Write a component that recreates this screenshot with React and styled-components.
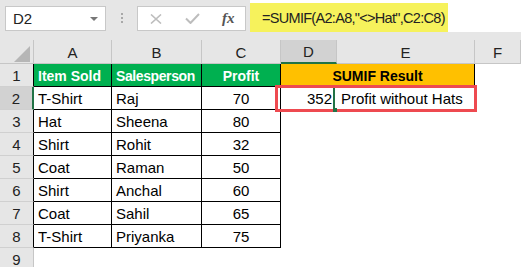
import styled, { createGlobalStyle } from 'styled-components';

const GlobalStyle = createGlobalStyle`
  body {
    margin: 0;
    background: #fff;
    font-family: "Liberation Sans", Arial, sans-serif;
    overflow: hidden;
  }
`;

const columns = ['A', 'B', 'C', 'D', 'E', 'F'];

const rows = [
  ['T-Shirt', 'Raj', 70],
  ['Hat', 'Sheena', 80],
  ['Shirt', 'Rohit', 32],
  ['Coat', 'Raman', 50],
  ['Shirt', 'Anchal', 60],
  ['Coat', 'Sahil', 65],
  ['T-Shirt', 'Priyanka', 75],
];

const App = () => {
  return (
    <>
      <GlobalStyle />
      <Toolbar>
        <NameBox>
          D2
          <Caret />
        </NameBox>
        <Grip>
          <i />
          <i />
          <i />
        </Grip>
        <FxBox>
          <svg width="12" height="10" viewBox="0 0 12 10">
            <path d="M1 0.5 L11 9.5 M11 0.5 L1 9.5" stroke="#bdbdbd" strokeWidth="1.6" fill="none" />
          </svg>
          <svg width="15" height="11" viewBox="0 0 15 11">
            <path d="M1 5.5 L5.5 10 L14 1" stroke="#bdbdbd" strokeWidth="2" fill="none" />
          </svg>
          <FxLabel>fx</FxLabel>
        </FxBox>
        <FormulaBar>
          <Highlight>=SUMIF(A2:A8,"&lt;&gt;Hat",C2:C8)</Highlight>
        </FormulaBar>
      </Toolbar>

      <Sheet>
        <Corner>
          <svg width="16" height="16" viewBox="0 0 16 16">
            <polygon points="0,16 16,16 16,0" fill="#b6b6b6" />
          </svg>
        </Corner>
        {columns.map((c) => (
          <ColHead key={c} $selected={c === 'D'}>{c}</ColHead>
        ))}

        <RowHead $table>1</RowHead>
        <Cell $bg="#00b050" $fg="#fff" $bold $edge>Item Sold</Cell>
        <Cell $bg="#00b050" $fg="#fff" $bold $edge $tight>Salesperson</Cell>
        <Cell $bg="#00b050" $fg="#fff" $bold $edge $align="center">Profit</Cell>
        <Cell $bg="#ffc000" $bold $edge $align="center" $span={2}>SUMIF Result</Cell>
        <Cell />

        {rows.map(([item, person, profit], i) => (
          <Row key={i}>
            <RowHead $table $selected={i === 0}>{i + 2}</RowHead>
            <Cell $edge>{item}</Cell>
            <Cell $edge>{person}</Cell>
            <Cell $edge $align="center">{profit}</Cell>
            {i === 0 ? (
              <>
                <ActiveCell $align="right">352</ActiveCell>
                <Cell>Profit without Hats</Cell>
              </>
            ) : (
              <>
                <Cell />
                <Cell />
              </>
            )}
            <Cell />
          </Row>
        ))}

        <RowHead>9</RowHead>
        {columns.map((c) => (
          <Cell key={c} />
        ))}

        <Callout />
      </Sheet>
    </>
  );
};

export default App;

const Toolbar = styled.div`
  height: 40px;
  background: #e6e6e6;
  display: flex;
  align-items: flex-start;
`;

const NameBox = styled.div`
  margin: 6px 0 0 5px;
  width: 101px;
  height: 25px;
  box-sizing: border-box;
  border: 1px solid #c8c8c8;
  background: #fff;
  display: flex;
  align-items: center;
  justify-content: space-between;
  padding: 0 7px 0 7px;
  font-size: 15px;
  color: #222;
`;

const Caret = styled.span`
  width: 0;
  height: 0;
  border-left: 4px solid transparent;
  border-right: 4px solid transparent;
  border-top: 4px solid #777;
`;

const Grip = styled.div`
  margin: 13px 14px 0 15px;
  display: flex;
  flex-direction: column;
  gap: 2px;

  i {
    display: block;
    width: 2px;
    height: 2px;
    background: #a8a8a8;
  }
`;

const FxBox = styled.div`
  margin-top: 6px;
  width: 109px;
  height: 25px;
  box-sizing: border-box;
  border: 1px solid #c8c8c8;
  background: #fff;
  display: flex;
  align-items: center;
  padding-left: 12px;
  gap: 23px;
`;

const FxLabel = styled.span`
  font-family: "Liberation Serif", "Times New Roman", serif;
  font-style: italic;
  font-weight: 700;
  font-size: 15px;
  color: #555;
  margin-left: -1px;
`;

const FormulaBar = styled.div`
  margin-left: 4px;
  flex: 1;
  height: 32px;
  background: #fff;
`;

const Highlight = styled.div`
  margin-top: 3px;
  width: 198px;
  height: 29px;
  box-sizing: border-box;
  background: #f6f25c;
  display: flex;
  align-items: center;
  padding-left: 12px;
  font-size: 14.5px;
  letter-spacing: -0.7px;
  color: #222;
  white-space: nowrap;
`;

const Sheet = styled.div`
  position: relative;
  display: grid;
  grid-template-columns: 34px 78px 90px 79px 56px 138px 1fr;
  grid-template-rows: 24px repeat(9, 23px);
  font-size: 15px;
`;

const Row = styled.div`
  display: contents;
`;

const Corner = styled.div`
  background: #e6e6e6;
  border-right: 1px solid #c6c6c6;
  border-bottom: 1px solid #c6c6c6;
  box-sizing: border-box;
  display: flex;
  align-items: flex-end;
  justify-content: flex-end;
  padding: 0 3px 1px 0;
`;

const ColHead = styled.div`
  background: ${(p) => (p.$selected ? '#d2d2d2' : '#e6e6e6')};
  border-right: 1px solid #c6c6c6;
  border-bottom: ${(p) => (p.$selected ? '2px solid #217346' : '1px solid #c6c6c6')};
  box-sizing: border-box;
  display: flex;
  align-items: center;
  justify-content: center;
  color: #222;
  padding-top: 1px;
`;

const RowHead = styled.div`
  background: ${(p) => (p.$selected ? '#d2d2d2' : '#e6e6e6')};
  border-bottom: 1px solid #d0d0d0;
  border-right: ${(p) =>
    p.$selected ? '2px solid #217346' : p.$table ? '1px solid #000' : '1px solid #c6c6c6'};
  box-sizing: border-box;
  display: flex;
  align-items: flex-end;
  justify-content: center;
  line-height: 18px;
  padding-bottom: 1px;
  color: #222;
`;

const Cell = styled.div`
  grid-column: span ${(p) => p.$span || 1};
  background: ${(p) => p.$bg || '#fff'};
  color: ${(p) => p.$fg || '#000'};
  font-weight: ${(p) => (p.$bold ? 700 : 400)};
  font-size: ${(p) => (p.$bold ? '14px' : '15px')};
  letter-spacing: ${(p) => (p.$tight ? '-0.4px' : '0')};
  border-right: 1px solid ${(p) => (p.$edge ? '#000' : 'transparent')};
  border-bottom: 1px solid ${(p) => (p.$edge ? '#000' : 'transparent')};
  box-sizing: border-box;
  display: flex;
  align-items: flex-end;
  justify-content: ${(p) =>
    p.$align === 'center' ? 'center' : p.$align === 'right' ? 'flex-end' : 'flex-start'};
  line-height: 18px;
  padding: 0 4px 1px 4px;
  white-space: nowrap;
`;

const ActiveCell = styled(Cell)`
  position: relative;

  /* only the right edge of the selection frame shows past the callout */
  &::after {
    content: '';
    position: absolute;
    top: 0;
    right: 1px;
    bottom: 0;
    width: 2px;
    background: #217346;
  }

  &::before {
    content: '';
    position: absolute;
    right: -1px;
    bottom: -3px;
    width: 4px;
    height: 4px;
    background: #217346;
    z-index: 3;
  }
`;

const Callout = styled.div`
  position: absolute;
  left: 275px;
  top: 45px;
  width: 202px;
  height: 27px;
  box-sizing: border-box;
  border: 3px solid #ee4a50;
  z-index: 2;
  pointer-events: none;
`;
